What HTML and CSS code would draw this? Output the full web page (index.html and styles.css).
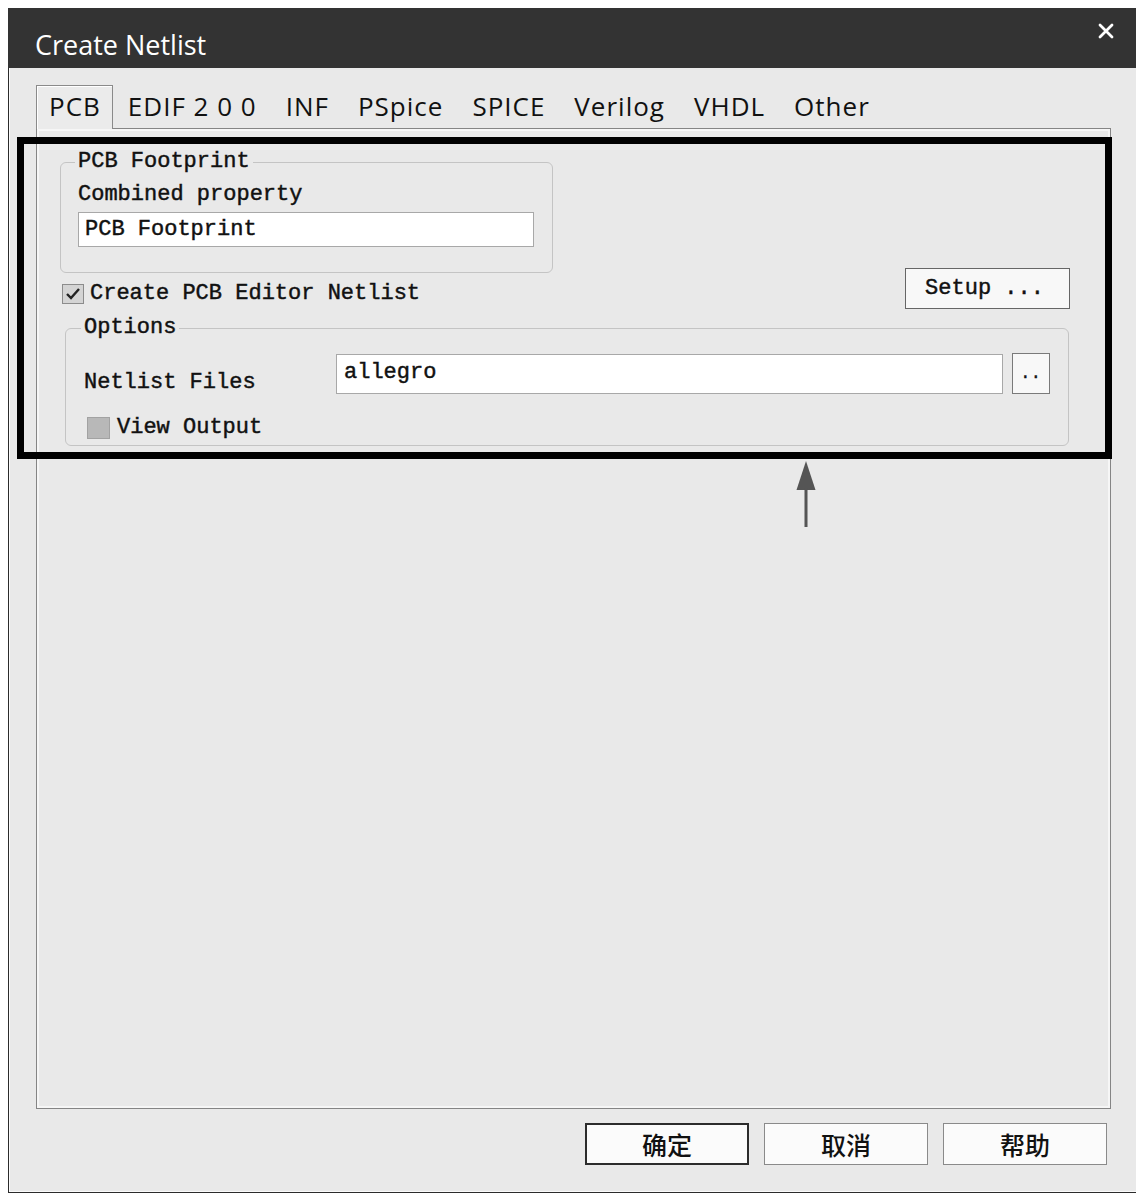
FILE: index.html
```html
<!DOCTYPE html>
<html lang="en">

<head>
    <meta charset="UTF-8">
    <title>Create Netlist</title>
    <link rel="stylesheet" href="styles.css">
</head>

<body>

    <div class="window">
        <header class="titlebar">
            <span class="title">Create Netlist</span>
            <svg class="close" width="16" height="16" viewBox="0 0 16 16">
                <path d="M2 2 L14 14 M14 2 L2 14" stroke="#fff" stroke-width="2.8" stroke-linecap="round" />
            </svg>
        </header>

        <div class="client">
            <nav class="tabs">
                <div class="tab active">PCB</div>
                <div class="tab">EDIF 2 0 0</div>
                <div class="tab">INF</div>
                <div class="tab">PSpice</div>
                <div class="tab">SPICE</div>
                <div class="tab">Verilog</div>
                <div class="tab">VHDL</div>
                <div class="tab">Other</div>
            </nav>

            <section class="panel">
                <fieldset class="group footprint">
                    <legend>PCB Footprint</legend>
                    <div class="label">Combined property</div>
                    <div class="field">PCB Footprint</div>
                </fieldset>

                <div class="checkrow">
                    <div class="check">
                        <span class="box checked">
                            <svg width="20" height="18" viewBox="0 0 20 18">
                                <path d="M4 9 L8 13 L16 4" fill="none" stroke="#222" stroke-width="2.4" />
                            </svg>
                        </span>
                        Create PCB Editor Netlist
                    </div>
                    <div class="btn setup">Setup ...</div>
                </div>

                <fieldset class="group options">
                    <legend>Options</legend>
                    <div class="filerow">
                        <span class="label files">Netlist Files</span>
                        <div class="field wide">allegro</div>
                        <div class="btn browse">..</div>
                    </div>
                    <div class="check view">
                        <span class="box grey"></span>
                        View Output
                    </div>
                </fieldset>
            </section>

            <div class="buttons">
                <div class="btn dlg default">确定</div>
                <div class="btn dlg">取消</div>
                <div class="btn dlg">帮助</div>
            </div>
        </div>

        <!-- annotation over the screenshot -->
        <div class="mark"></div>
        <svg class="arrow" width="20" height="66" viewBox="0 0 20 66">
            <polygon points="10,0 0.5,29 19.5,29" fill="#555" />
            <rect x="8.5" y="27" width="3" height="39" fill="#555" />
        </svg>
    </div>

</body>

</html>
```

FILE: styles.css
```css
body {
    margin: 8px;
    background: #fff;
}

.window {
    position: relative;
    width: 1132px;
    height: 1185px;
    box-sizing: border-box;
    display: flex;
    flex-direction: column;
    background: #e9e9e9;
    border: 1px solid #2b2b2b;
    border-top: none;
    box-shadow: inset 1px 0 0 #fafafa, inset -1px -1px 0 #fafafa;
}


/* TITLE */

.titlebar {
    height: 60px;
    margin: 0 -1px;
    background: #333;
    display: flex;
    justify-content: space-between;
    align-items: flex-start;
}

.title {
    font-family: 'Open Sans', sans-serif;
    font-size: 27px;
    line-height: 1;
    color: #fff;
    padding: 23px 0 0 27px;
}

.close {
    margin: 15px 26px 0 0;
}


/* TABS */

.client {
    flex: 1;
    display: flex;
    flex-direction: column;
    padding: 17px 28px 27px 27px;
}

.tabs {
    display: flex;
    height: 43px;
    font-family: 'Open Sans', sans-serif;
    font-size: 26px;
    letter-spacing: 1px;
    color: #111;
}

.tab {
    line-height: 40px;
    border-top: 1px solid transparent;
    padding: 0 14px 2px 15px;
}

.tab.active {
    position: relative;
    z-index: 1;
    padding: 0 11px 3px 12px;
    margin-bottom: -1px;
    background: #ebebeb;
    border: 1px solid #8a8a8a;
    border-bottom: none;
    box-shadow: inset 1px 1px 0 #fff;
}

.panel {
    flex: 1;
    border: 1px solid #858585;
    box-shadow: inset 0 0 0 2px #f6f6f6;
    padding: 22px 0 0 23px;
    font-family: 'Liberation Mono', monospace;
    font-size: 22px;
    -webkit-text-stroke: 0.45px #111;
    color: #111;
}


/* GROUPS */

.group {
    margin: 0;
    box-sizing: border-box;
    border: 1px solid #c4c4c4;
    border-radius: 6px;
    min-width: 0;
}

.group legend {
    line-height: 22px;
    padding: 0 3px;
    margin-left: -3px;
}

.footprint {
    width: 493px;
    padding: 0 18px 25px 17px;
}

.label {
    line-height: 22px;
    margin-top: 11px;
}

.field {
    box-sizing: border-box;
    height: 35px;
    margin-top: 6px;
    line-height: 33px;
    padding-left: 6px;
    background: #fff;
    border: 1px solid #a8a8a8;
}

.checkrow {
    display: flex;
    justify-content: space-between;
    align-items: flex-start;
    margin: -5px 40px 0 2px;
}

.check {
    display: flex;
    align-items: center;
    gap: 6px;
    line-height: 22px;
    margin-top: 15px;
}

.box {
    box-sizing: border-box;
    width: 22px;
    height: 20px;
    border: 1px solid #8c8c8c;
    display: flex;
    align-items: center;
    justify-content: center;
}

.box.checked {
    background: #d4d4d4;
}

.box.grey {
    width: 23px;
    height: 22px;
    background: #b8b8b8;
    border-color: #a2a2a2;
}

.btn {
    box-sizing: border-box;
    background: #f8f8f8;
    border: 1px solid #7a7a7a;
    text-align: center;
}

.setup {
    width: 165px;
    height: 41px;
    line-height: 39px;
    padding-right: 6px;
    border-color: #666;
}

.options {
    margin: 8px 41px 0 5px;
    padding: 0 18px 6px 18px;
}

.filerow {
    display: flex;
    align-items: flex-end;
    margin-top: 14px;
}

.label.files {
    width: 252px;
    margin-top: 0;
}

.field.wide {
    flex: 1;
    height: 40px;
    margin-top: 0;
    line-height: 36px;
    padding-left: 7px;
}

.browse {
    width: 38px;
    height: 41px;
    margin-left: 9px;
    line-height: 40px;
    font-size: 16px;
    letter-spacing: 1px;
}

.check.view {
    gap: 7px;
    margin: 23px 0 0 3px;
}


/* DIALOG BUTTONS */

.buttons {
    display: flex;
    justify-content: flex-end;
    gap: 15px;
    margin: 14px 4px 0 0;
}

.dlg {
    width: 164px;
    height: 42px;
    line-height: 40px;
    background: #fbfbfb;
    border-color: #8a8a8a;
    font-family: 'Noto Sans CJK SC', sans-serif;
    font-size: 25px;
    font-weight: 500;
    color: #111;
}

.dlg.default {
    border: 2px solid #2c2c2c;
    line-height: 38px;
}


/* ANNOTATION */

.mark {
    position: absolute;
    left: 8px;
    top: 129px;
    width: 1095px;
    height: 322px;
    box-sizing: border-box;
    border: 7px solid #000;
    pointer-events: none;
}

.arrow {
    position: absolute;
    left: 787px;
    top: 453px;
}
```
